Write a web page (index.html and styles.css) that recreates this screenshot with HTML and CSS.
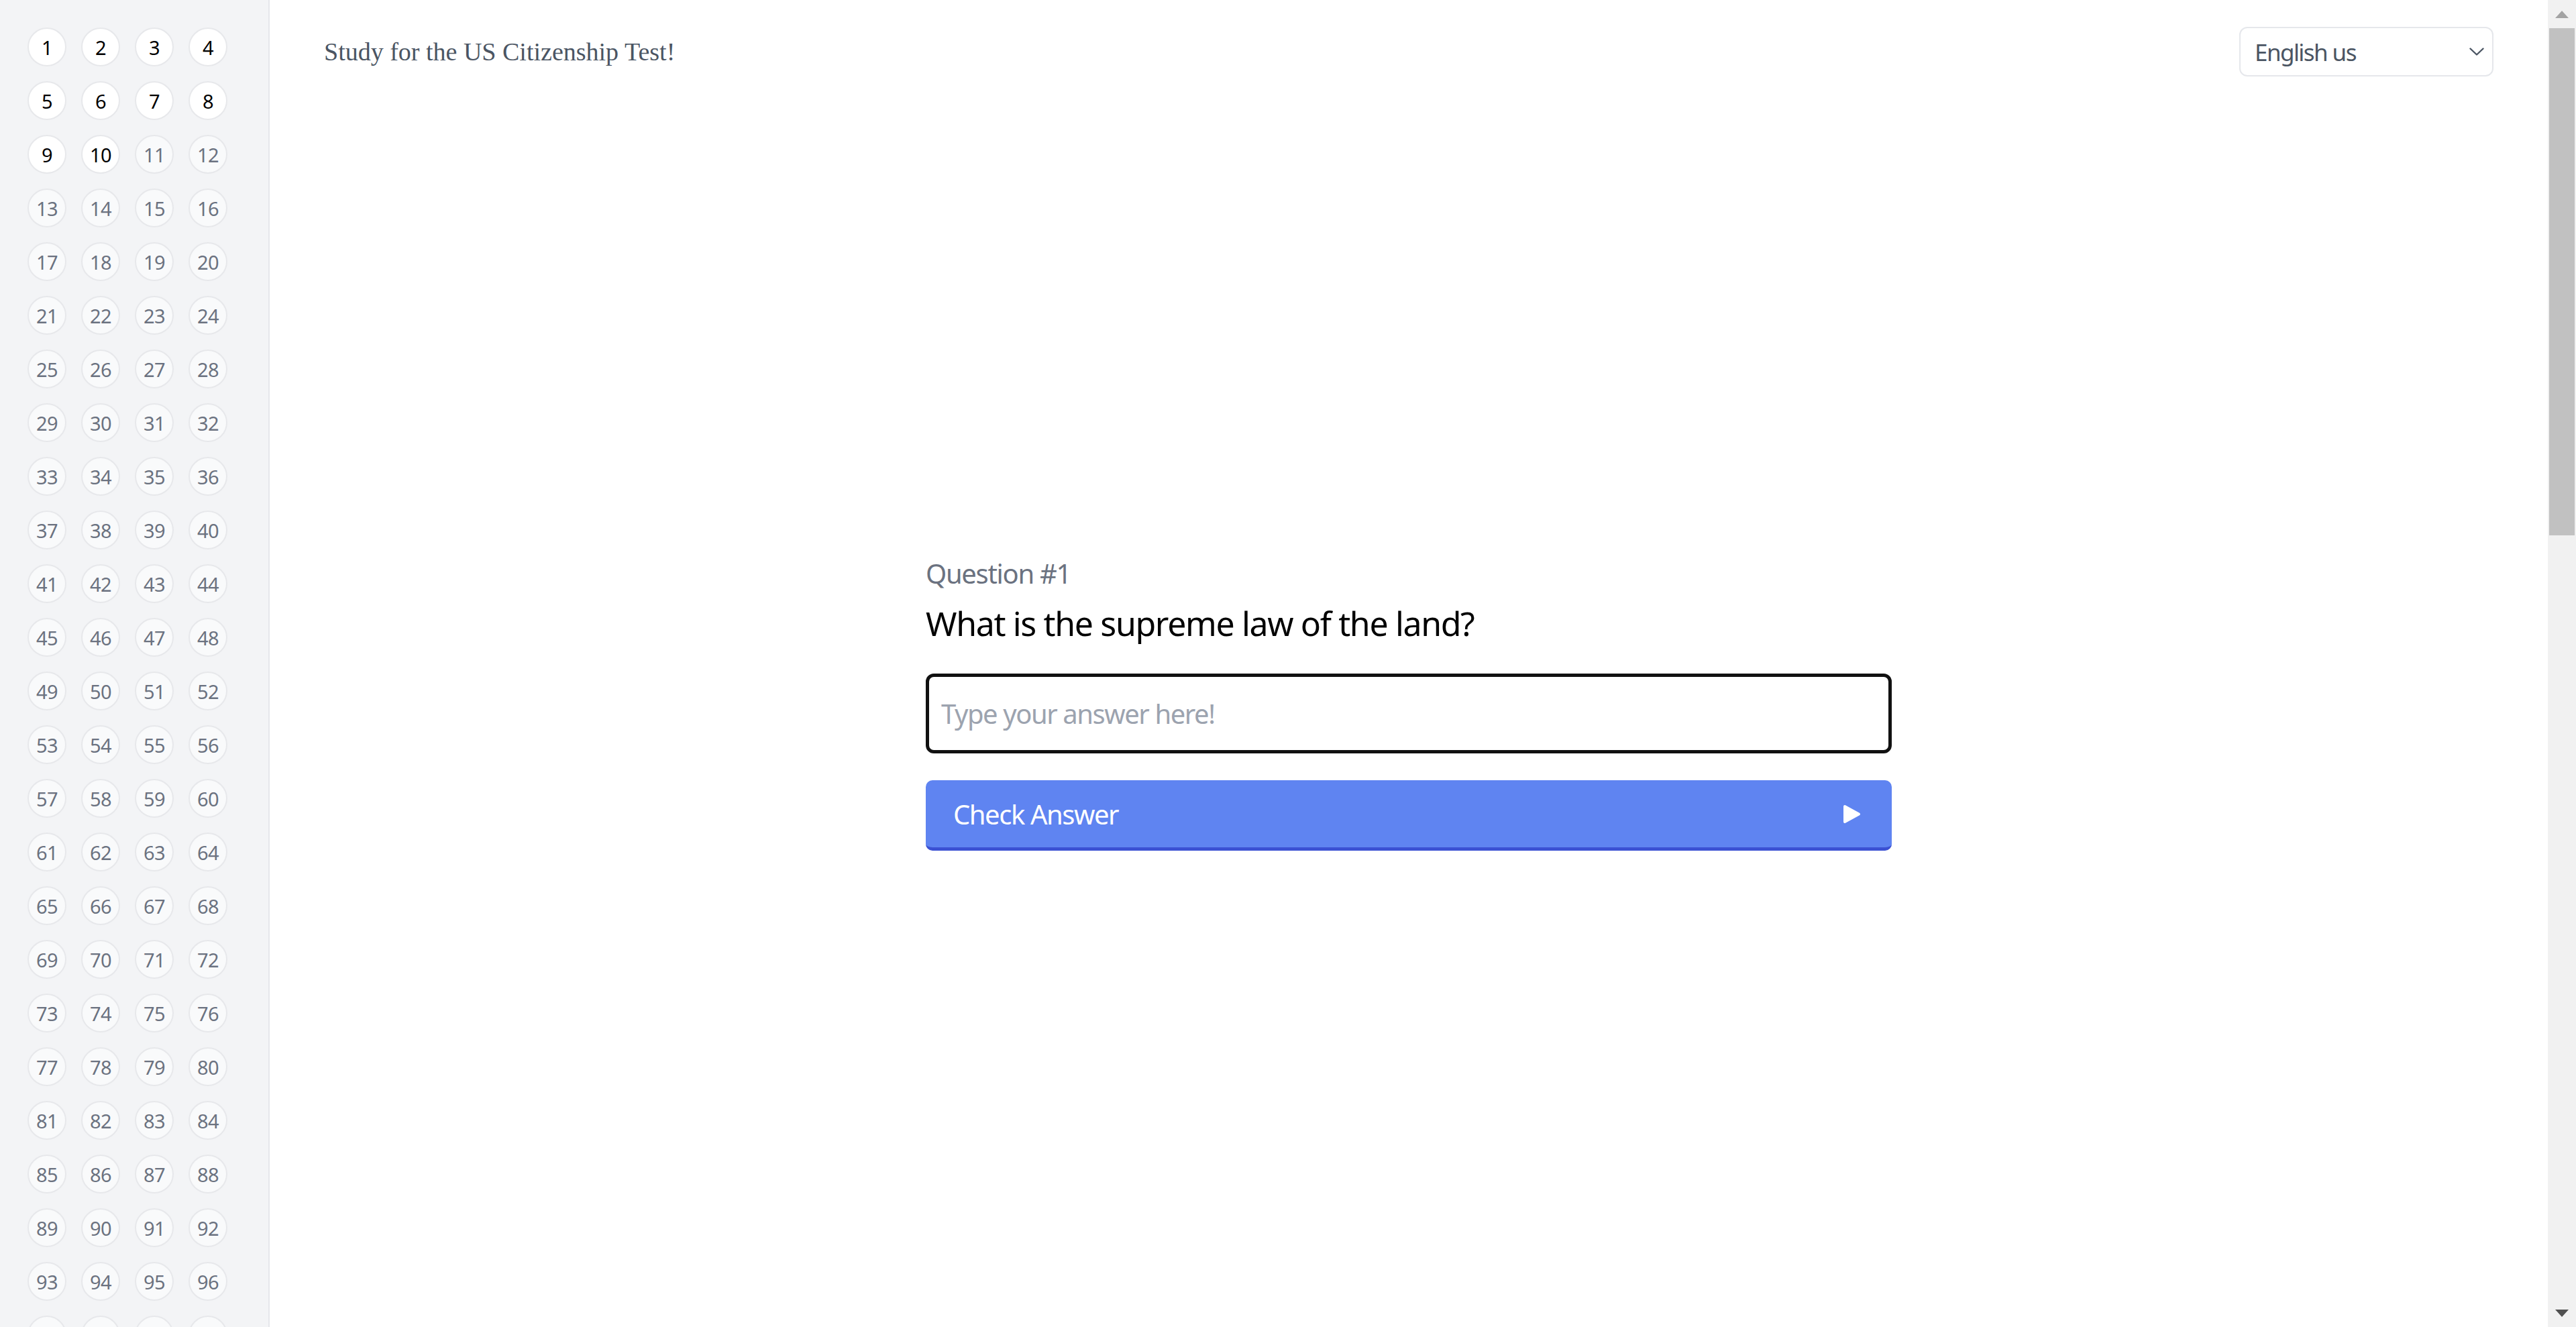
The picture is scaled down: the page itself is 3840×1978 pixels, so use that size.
FILE: index.html
```html
<!DOCTYPE html>
<html lang="en">
<head>
<meta charset="utf-8">
<title>Study for the US Citizenship Test!</title>
<link rel="stylesheet" href="styles.css">
</head>
<body>
<div class="app">
  <aside class="sidebar">
    <nav class="grid">
      <button class="num done">1</button><button class="num done">2</button><button class="num done">3</button><button class="num done">4</button>
      <button class="num done">5</button><button class="num done">6</button><button class="num done">7</button><button class="num done">8</button>
      <button class="num done">9</button><button class="num done">10</button><button class="num">11</button><button class="num">12</button>
      <button class="num">13</button><button class="num">14</button><button class="num">15</button><button class="num">16</button>
      <button class="num">17</button><button class="num">18</button><button class="num">19</button><button class="num">20</button>
      <button class="num">21</button><button class="num">22</button><button class="num">23</button><button class="num">24</button>
      <button class="num">25</button><button class="num">26</button><button class="num">27</button><button class="num">28</button>
      <button class="num">29</button><button class="num">30</button><button class="num">31</button><button class="num">32</button>
      <button class="num">33</button><button class="num">34</button><button class="num">35</button><button class="num">36</button>
      <button class="num">37</button><button class="num">38</button><button class="num">39</button><button class="num">40</button>
      <button class="num">41</button><button class="num">42</button><button class="num">43</button><button class="num">44</button>
      <button class="num">45</button><button class="num">46</button><button class="num">47</button><button class="num">48</button>
      <button class="num">49</button><button class="num">50</button><button class="num">51</button><button class="num">52</button>
      <button class="num">53</button><button class="num">54</button><button class="num">55</button><button class="num">56</button>
      <button class="num">57</button><button class="num">58</button><button class="num">59</button><button class="num">60</button>
      <button class="num">61</button><button class="num">62</button><button class="num">63</button><button class="num">64</button>
      <button class="num">65</button><button class="num">66</button><button class="num">67</button><button class="num">68</button>
      <button class="num">69</button><button class="num">70</button><button class="num">71</button><button class="num">72</button>
      <button class="num">73</button><button class="num">74</button><button class="num">75</button><button class="num">76</button>
      <button class="num">77</button><button class="num">78</button><button class="num">79</button><button class="num">80</button>
      <button class="num">81</button><button class="num">82</button><button class="num">83</button><button class="num">84</button>
      <button class="num">85</button><button class="num">86</button><button class="num">87</button><button class="num">88</button>
      <button class="num">89</button><button class="num">90</button><button class="num">91</button><button class="num">92</button>
      <button class="num">93</button><button class="num">94</button><button class="num">95</button><button class="num">96</button>
      <button class="num">97</button><button class="num">98</button><button class="num">99</button><button class="num">100</button>
    </nav>
  </aside>
  <main class="main">
    <header class="header">
      <h1 class="title">Study for the US Citizenship Test!</h1>
      <div class="select-wrap">
        <select class="lang">
          <option>English us</option>
        </select>
        <svg class="chevron" width="22" height="12" viewBox="0 0 22 12"><path d="M1.5 1.5 L11 10.5 L20.5 1.5" fill="none" stroke="#4b5563" stroke-width="2.4" stroke-linecap="round" stroke-linejoin="round"/></svg>
      </div>
    </header>
    <section class="content">
      <div class="quiz">
        <p class="label">Question #1</p>
        <h2 class="question">What is the supreme law of the land?</h2>
        <input class="answer" type="text" placeholder="Type your answer here!">
        <button class="check">
          <span>Check Answer</span>
          <svg class="play" width="27" height="29" viewBox="0 0 27 29"><path d="M3 3 L24 14.5 L3 26 Z" fill="#fff" stroke="#fff" stroke-width="4" stroke-linejoin="round"/></svg>
        </button>
      </div>
    </section>
  </main>
  <div class="scrollbar">
    <div class="sb-btn"><span class="tri-up"></span></div>
    <div class="sb-thumb"></div>
    <div class="sb-fill"></div>
    <div class="sb-btn"><span class="tri-down"></span></div>
  </div>
</div>
</body>
</html>
```
FILE: styles.css
```css
* { box-sizing: border-box; }
html, body { margin: 0; padding: 0; height: 100%; overflow: hidden; }
body {
  font-family: "Noto Sans", "Open Sans", sans-serif;
  background: #ffffff;
  color: #000;
}
.app { display: flex; height: 100vh; }

.sidebar {
  width: 402px;
  flex: none;
  background: #f3f4f6;
  border-right: 2px solid #e5e7eb;
  overflow: hidden;
}
.grid {
  display: grid;
  grid-template-columns: repeat(4, 58px);
  grid-auto-rows: 58px;
  gap: 22px;
  padding: 41px 0 0 41px;
}
.num {
  width: 58px;
  height: 58px;
  padding: 0;
  border: 2px solid #e7e8eb;
  border-radius: 50%;
  background: #f9fafb;
  color: #6b7280;
  font-family: "Noto Sans", sans-serif;
  font-size: 29px;
  letter-spacing: -0.02em;
  line-height: 1;
  display: flex;
  align-items: center;
  justify-content: center;
}
.num.done { background: #ffffff; color: #000; }

.main { flex: 1; display: flex; flex-direction: column; min-width: 0; }
.header {
  display: flex;
  justify-content: space-between;
  align-items: center;
  padding: 40px 81px 0 81px;
}
.title {
  margin: 0;
  font-family: "Liberation Serif", serif;
  font-weight: 400;
  font-size: 38px;
  color: #4b5563;
}
.select-wrap { position: relative; width: 379px; height: 74px; }
.lang {
  appearance: none;
  -webkit-appearance: none;
  width: 100%;
  height: 100%;
  border: 2px solid #e5e7eb;
  border-radius: 12px;
  background: #fff;
  padding: 0 0 0 21px;
  font-family: "Noto Sans", sans-serif;
  font-size: 35px;
  letter-spacing: -0.045em;
  color: #4b5563;
}
.chevron { position: absolute; right: 14px; top: 31px; pointer-events: none; }

.content { flex: 1; display: flex; justify-content: center; }
.quiz { width: 1440px; margin-top: 711px; display: flex; flex-direction: column; }
.label {
  margin: 0;
  font-size: 40px;
  line-height: 60px;
  letter-spacing: -0.033em;
  color: #6b7280;
}
.question {
  margin: 7px 0 0 0;
  font-weight: 400;
  font-size: 50px;
  line-height: 75px;
  letter-spacing: -0.027em;
  color: #000;
}
.answer {
  margin-top: 37px;
  height: 119px;
  width: 100%;
  border: 5px solid #111;
  border-radius: 12px;
  padding: 0 18px;
  font-family: "Noto Sans", sans-serif;
  font-size: 40px;
  letter-spacing: -0.036em;
  outline: none;
}
.answer::placeholder { color: #9ca3af; }
.check {
  margin-top: 40px;
  height: 105px;
  width: 100%;
  border: none;
  border-bottom: 5px solid #3b51d3;
  border-radius: 10px;
  background: #5f84f1;
  color: #fff;
  font-family: "Noto Sans", sans-serif;
  font-size: 40px;
  letter-spacing: -0.036em;
  display: flex;
  align-items: center;
  justify-content: space-between;
  padding: 0 46px 0 41px;
}
.play { display: block; }

.scrollbar {
  width: 42px;
  flex: none;
  background: #f1f1f1;
  display: flex;
  flex-direction: column;
}
.sb-btn { height: 42px; display: flex; align-items: center; justify-content: center; flex: none; }
.tri-up { width: 0; height: 0; border-left: 10px solid transparent; border-right: 10px solid transparent; border-bottom: 11px solid #a3a3a3; }
.tri-down { width: 0; height: 0; border-left: 10px solid transparent; border-right: 10px solid transparent; border-top: 11px solid #505050; }
.sb-thumb { height: 756px; margin: 0 2px; background: #c1c1c1; flex: none; }
.sb-fill { flex: 1; }
```
